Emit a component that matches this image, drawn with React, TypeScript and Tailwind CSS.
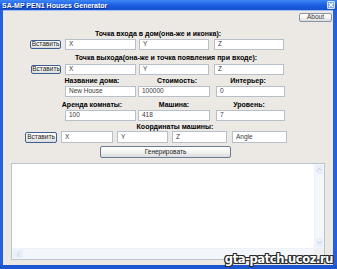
import React from "react";

const F = "font-['Liberation_Sans',Arial,sans-serif]";

function Btn({ w, h, label, extra = "" }: { w: string; h: string; label: string; extra?: string }) {
  return (
    <div
      className={`${w} ${h} ${extra} shrink-0 flex items-center justify-center rounded-[2px] border border-[#3d5f94] bg-gradient-to-b from-[#ffffff] via-[#f4f4f0] to-[#d9dbe0] text-[6.5px] leading-none text-[#1a1a1a]`}
    >
      {label}
    </div>
  );
}

function Inp({ w, v, h = "h-[11px]" }: { w: string; v: string; h?: string }) {
  return (
    <div
      className={`${w} ${h} shrink-0 flex items-center border border-[#b7bfcb] bg-white pl-[3px] text-[6.5px] leading-none text-[#3a3a3a]`}
    >
      {v}
    </div>
  );
}

function Label({ children, cls }: { children: React.ReactNode; cls: string }) {
  return (
    <div className={`${cls} h-[8px] shrink-0 flex items-center justify-center text-[7px] font-bold leading-none text-black whitespace-nowrap`}>
      {children}
    </div>
  );
}

export default function App() {
  return (
    <div className={`${F} w-[337px] h-[269px] flex flex-col overflow-hidden bg-[#1f5ad8]`}>
      {/* title bar */}
      <div className="h-[10px] shrink-0 flex items-center justify-between bg-gradient-to-b from-[#3f86f5] via-[#1b5fe3] to-[#1750cf] pl-[2px] pr-[2px]">
        <span className="text-[7px] font-bold leading-none text-white [text-shadow:1px_1px_0_#0a2a80] whitespace-nowrap">
          SA-MP PEN1 Houses Generator
        </span>
        <div className="w-[8px] h-[8px] rounded-[1px] border border-[#dce6fa] bg-[#78a4ee] flex items-center justify-center">
          <svg width="6" height="6" viewBox="0 0 6 6">
            <path d="M1 1L5 5M5 1L1 5" stroke="white" strokeWidth="1.2" />
          </svg>
        </div>
      </div>

      <div className="flex-1 flex min-h-0">
        <div className="w-[3px] shrink-0 bg-[#2561dd]" />
        <div className="flex-1 min-w-0 relative bg-[#ece9e5] border-t border-[#9fbff5] flex flex-col">
          {/* About */}
          <div className="flex justify-end pr-[1px] mt-[2px]">
            <Btn w="w-[33px]" h="h-[9px]" label="About" extra="border-[#8a93a3] text-[#333]" />
          </div>

          <Label cls="mt-[7px] w-[310px]">Точка входа в дом(она-же и иконка):</Label>
          <div className="flex items-center mt-[2px] h-[11px] pl-[27px]">
            <Btn w="w-[31px]" h="h-[9px]" label="Вставить" />
            <Inp w="w-[71px] ml-[4px]" v="X" />
            <Inp w="w-[70px] ml-[3px]" v="Y" />
            <Inp w="w-[70px] ml-[5px]" v="Z" />
          </div>

          <Label cls="mt-[3px] w-[326px]">Точка выхода(она-же и точка появления при входе):</Label>
          <div className="flex items-center mt-[3px] h-[11px] pl-[28px]">
            <Btn w="w-[30px]" h="h-[9px]" label="Вставить" />
            <Inp w="w-[71px] ml-[4px]" v="X" />
            <Inp w="w-[70px] ml-[3px]" v="Y" />
            <Inp w="w-[70px] ml-[5px]" v="Z" />
          </div>

          <div className="flex mt-[1px] pl-[52px]">
            <Label cls="w-[74px]">Название дома:</Label>
            <Label cls="w-[74px] ml-[11px]">Стоимость:</Label>
            <Label cls="w-[68px]">Интерьер:</Label>
          </div>
          <div className="flex items-center mt-[2px] h-[11px] pl-[62px]">
            <Inp w="w-[71px]" v="New House" />
            <Inp w="w-[72px] ml-[2px]" v="100000" />
            <Inp w="w-[69px] ml-[6px]" v="0" />
          </div>

          <div className="flex mt-[3px] pl-[52px]">
            <Label cls="w-[74px]">Аренда комнаты:</Label>
            <Label cls="w-[70px] ml-[10px]">Машина:</Label>
            <Label cls="w-[70px] ml-[5px]">Уровень:</Label>
          </div>
          <div className="flex items-center mt-[2px] h-[11px] pl-[62px]">
            <Inp w="w-[71px]" v="100" />
            <Inp w="w-[72px] ml-[2px]" v="418" />
            <Inp w="w-[69px] ml-[6px]" v="7" />
          </div>

          <Label cls="mt-[1px] ml-[17px] w-[310px]">Координаты машины:</Label>
          <div className="flex items-center mt-[1px] h-[12px] pl-[22px]">
            <Btn w="w-[32px]" h="h-[11px]" label="Вставить" />
            <Inp w="w-[52px] ml-[4px]" v="X" h="h-[12px]" />
            <Inp w="w-[51px] ml-[4px]" v="Y" h="h-[12px]" />
            <Inp w="w-[55px] ml-[4px]" v="Z" h="h-[12px]" />
            <Inp w="w-[55px] ml-[5px]" v="Angle" h="h-[12px]" />
          </div>

          <div className="flex mt-[3px] pl-[97px]">
            <Btn
              w="w-[131px]"
              h="h-[12px]"
              label="Генерировать"
              extra="border-[#6b7a94] from-[#ffffff] via-[#eef1f6] to-[#c9d2e0]"
            />
          </div>

          {/* text area */}
          <div className="mt-[5px] ml-[8px] w-[314px] h-[97px] shrink-0 border border-[#b9c3d2] bg-white flex flex-col">
            <div className="flex-1 flex min-h-0">
              <div className="flex-1" />
              <div className="w-[10px] bg-[#f3f6fb] border-l border-[#eef2f8] flex flex-col justify-between">
                <div className="h-[9px] mt-[1px] mx-[1px] rounded-[1px] bg-[#e9eff8] flex items-center justify-center">
                  <svg width="5" height="3" viewBox="0 0 5 3"><path d="M0.5 2.5L2.5 0.5L4.5 2.5" stroke="#c3cde0" fill="none" /></svg>
                </div>
                <div className="h-[9px] mb-[1px] mx-[1px] rounded-[1px] bg-[#e9eff8] flex items-center justify-center">
                  <svg width="5" height="3" viewBox="0 0 5 3"><path d="M0.5 0.5L2.5 2.5L4.5 0.5" stroke="#c3cde0" fill="none" /></svg>
                </div>
              </div>
            </div>
            <div className="h-[11px] shrink-0 flex bg-[#f3f6fb] border-t border-[#eef2f8]">
              <div className="w-[10px] my-[1px] ml-[1px] rounded-[1px] bg-[#e9eff8] flex items-center justify-center">
                <svg width="3" height="5" viewBox="0 0 3 5"><path d="M2.5 0.5L0.5 2.5L2.5 4.5" stroke="#c3cde0" fill="none" /></svg>
              </div>
              <div className="flex-1" />
              <div className="w-[10px] bg-[#f0f0f0]" />
            </div>
          </div>

          {/* watermark */}
          <div className="absolute right-[0px] bottom-[0px] text-[11.5px] font-bold leading-none text-white font-['DejaVu_Sans',sans-serif] [text-shadow:1px_0_#2a2a2a,-1px_0_#2a2a2a,0_1px_#2a2a2a,0_-1px_#2a2a2a,1px_1px_#2a2a2a,-1px_-1px_#2a2a2a,1px_-1px_#2a2a2a,-1px_1px_#2a2a2a] tracking-[-0.4px]">
            gta-patch.ucoz.ru
          </div>
        </div>
        <div className="w-[4px] shrink-0 bg-[#2561dd]" />
      </div>
      <div className="h-[4px] shrink-0 bg-[#1d55cf]" />
    </div>
  );
}
